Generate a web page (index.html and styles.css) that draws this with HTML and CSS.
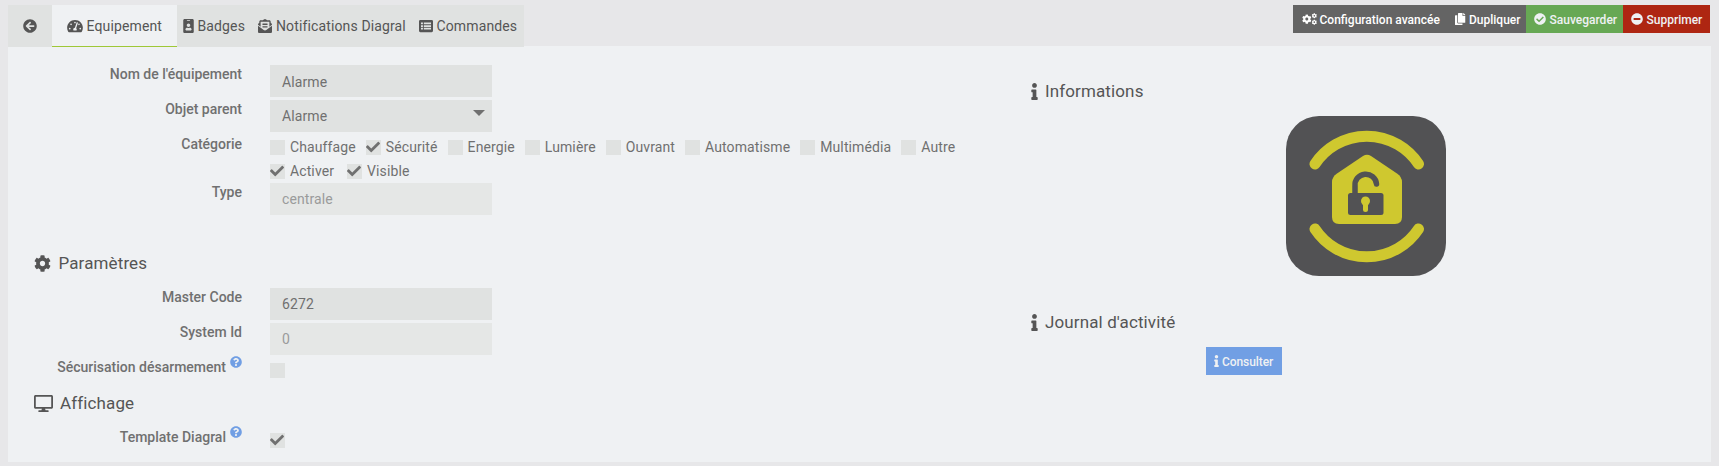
FILE: index.html
```html
<!DOCTYPE html>
<html lang="fr">
<head>
<meta charset="utf-8">
<title>Equipement</title>
<link rel="stylesheet" href="styles.css">
</head>
<body>
<svg class="defs" aria-hidden="true">
<symbol id="back" viewBox="0 0 512 512"><path d="M256 504C119 504 8 393 8 256S119 8 256 8s248 111 248 248-111 248-248 248zm28.9-143.6L209.4 288H392c13.3 0 24-10.7 24-24v-16c0-13.3-10.7-24-24-24H209.4l75.5-72.4c9.7-9.3 9.9-24.8.4-34.3l-11-10.9c-9.4-9.4-24.6-9.4-33.9 0L107.7 239c-9.4 9.4-9.4 24.6 0 33.9l132.7 132.7c9.4 9.4 24.6 9.4 33.9 0l11-10.9c9.5-9.5 9.3-25-.4-34.3z"/></symbol>
<symbol id="gauge" viewBox="0 0 576 512"><path d="M288 32C128.94 32 0 160.94 0 320c0 52.8 14.25 102.26 39.06 144.8 5.61 9.62 16.3 15.2 27.44 15.2h443c11.14 0 21.83-5.58 27.44-15.2C561.75 422.26 576 372.8 576 320c0-159.06-128.94-288-288-288zm0 64c14.71 0 26.58 10.13 30.32 23.65-1.11 2.26-2.64 4.23-3.45 6.67l-9.22 27.67c-5.13 3.49-10.97 6.01-17.64 6.01-17.67 0-32-14.33-32-32S270.33 96 288 96zM96 384c-17.67 0-32-14.33-32-32s14.33-32 32-32 32 14.33 32 32-14.33 32-32 32zm48-160c-17.67 0-32-14.33-32-32s14.33-32 32-32 32 14.33 32 32-14.33 32-32 32zm246.77-72.41l-61.33 184C343.13 347.33 352 364.54 352 384c0 11.72-3.38 22.55-8.88 32H232.88c-5.5-9.45-8.88-20.28-8.88-32 0-33.94 26.5-61.43 59.9-63.59l61.34-184.01c4.17-12.56 17.73-19.45 30.36-15.17 12.57 4.19 19.35 17.79 15.17 30.36zm14.66 57.2l15.52-46.55c3.47-1.29 7.13-2.23 11.05-2.23 17.67 0 32 14.33 32 32s-14.33 32-32 32c-11.38-.01-20.89-6.28-26.57-15.22zM480 384c-17.67 0-32-14.33-32-32s14.33-32 32-32 32 14.33 32 32-14.33 32-32 32z"/></symbol>
<symbol id="badge" viewBox="0 0 384 512"><path d="M336 0H48C21.5 0 0 21.5 0 48v416c0 26.5 21.5 48 48 48h288c26.5 0 48-21.5 48-48V48c0-26.5-21.5-48-48-48zM144 32h96c8.8 0 16 7.2 16 16s-7.2 16-16 16h-96c-8.8 0-16-7.2-16-16s7.2-16 16-16zm48 128c35.3 0 64 28.7 64 64s-28.7 64-64 64-64-28.7-64-64 28.7-64 64-64zm112 236.8c0 10.6-10 19.2-22.4 19.2H102.4C90 416 80 407.4 80 396.8v-19.2c0-31.8 30.1-57.6 67.2-57.6h5c12.3 5.1 25.7 8 39.8 8s27.6-2.9 39.8-8h5c37.1 0 67.2 25.8 67.2 57.6v19.2z"/></symbol>
<symbol id="mail" viewBox="0 0 512 512"><path d="M176 216h160c8.84 0 16-7.16 16-16v-16c0-8.84-7.16-16-16-16H176c-8.84 0-16 7.16-16 16v16c0 8.84 7.16 16 16 16zm-16 80c0 8.84 7.16 16 16 16h160c8.84 0 16-7.16 16-16v-16c0-8.84-7.16-16-16-16H176c-8.84 0-16 7.16-16 16v16zm96 121.13c-16.42 0-32.84-5.06-46.86-15.19L0 250.86V464c0 26.51 21.49 48 48 48h416c26.51 0 48-21.49 48-48V250.86L302.86 401.94c-14.02 10.12-30.44 15.19-46.86 15.19zm237.61-254.18c-8.85-6.94-17.24-13.47-29.61-22.81V96c0-26.51-21.49-48-48-48h-77.55c-3.04-2.2-5.87-4.26-9.04-6.56C312.6 29.17 279.2-.35 256 0c-23.2-.35-56.59 29.17-73.41 41.44-3.17 2.3-6 4.36-9.04 6.56H96c-26.51 0-48 21.49-48 48v44.14c-12.37 9.33-20.76 15.87-29.61 22.81A47.995 47.995 0 0 0 0 200.72v10.65l96 69.35V96h320v184.72l96-69.35v-10.65c0-14.74-6.78-28.67-18.39-37.77z"/></symbol>
<symbol id="list" viewBox="0 0 512 512"><path fill-rule="evenodd" d="M48 32H464a48 48 0 0 1 48 48V432a48 48 0 0 1-48 48H48a48 48 0 0 1-48-48V80a48 48 0 0 1 48-48zM72 124v64h72v-64zM176 124v64h264v-64zM72 224v64h72v-64zM176 224v64h264v-64zM72 324v64h72v-64zM176 324v64h264v-64z"/></symbol>
<symbol id="cog" viewBox="0 0 512 512"><path d="M487.4 315.7l-42.6-24.6c4.3-23.2 4.3-47 0-70.2l42.6-24.6c4.9-2.8 7.1-8.6 5.5-14-11.1-35.6-30-67.8-54.7-94.6-3.8-4.1-10-5.1-14.8-2.3L380.8 110c-17.9-15.4-38.5-27.3-60.8-35.1V25.8c0-5.6-3.9-10.5-9.4-11.7-36.7-8.2-74.3-7.8-109.2 0-5.5 1.2-9.4 6.1-9.4 11.7V75c-22.2 7.9-42.8 19.8-60.8 35.1L88.7 85.5c-4.9-2.8-11-1.9-14.8 2.3-24.7 26.7-43.6 58.9-54.7 94.6-1.7 5.4.6 11.2 5.5 14L67.3 221c-4.3 23.2-4.3 47 0 70.2l-42.6 24.6c-4.9 2.8-7.1 8.6-5.5 14 11.1 35.6 30 67.8 54.7 94.6 3.8 4.1 10 5.1 14.8 2.3l42.6-24.6c17.9 15.4 38.5 27.3 60.8 35.1v49.2c0 5.6 3.9 10.5 9.4 11.7 36.7 8.2 74.3 7.8 109.2 0 5.5-1.2 9.4-6.1 9.4-11.7v-49.2c22.2-7.9 42.8-19.8 60.8-35.1l42.6 24.6c4.9 2.8 11 1.9 14.8-2.3 24.7-26.7 43.6-58.9 54.7-94.6 1.5-5.5-.7-11.3-5.6-14.1zM256 336c-44.1 0-80-35.9-80-80s35.9-80 80-80 80 35.9 80 80-35.9 80-80 80z"/></symbol>
<symbol id="cogs" viewBox="0 0 640 512"><use href="#cog" x="0" y="56" width="410" height="410"/><use href="#cog" x="410" y="5" width="230" height="230"/><use href="#cog" x="410" y="277" width="230" height="230"/></symbol>
<symbol id="copy" viewBox="0 0 448 512"><path d="M320 448v40c0 13.255-10.745 24-24 24H24c-13.255 0-24-10.745-24-24V120c0-13.255 10.745-24 24-24h72v296c0 30.879 25.121 56 56 56h168zm0-344V0H152c-13.255 0-24 10.745-24 24v368c0 13.255 10.745 24 24 24h272c13.255 0 24-10.745 24-24V128H344c-13.2 0-24-10.8-24-24zm120.971-31.029L375.029 7.029A24 24 0 0 0 358.059 0H352v96h96v-6.059a24 24 0 0 0-7.029-16.97z"/></symbol>
<symbol id="ok" viewBox="0 0 512 512"><path d="M504 256c0 136.967-111.033 248-248 248S8 392.967 8 256 119.033 8 256 8s248 111.033 248 248zM227.314 387.314l184-184c6.248-6.248 6.248-16.379 0-22.627l-22.627-22.627c-6.248-6.249-16.379-6.249-22.628 0L216 308.118l-70.059-70.059c-6.248-6.248-16.379-6.248-22.628 0l-22.627 22.627c-6.248 6.248-6.248 16.379 0 22.627l104 104c6.249 6.249 16.379 6.249 22.628.001z"/></symbol>
<symbol id="minus" viewBox="0 0 512 512"><path d="M256 8C119 8 8 119 8 256s111 248 248 248 248-111 248-248S393 8 256 8zM124 296c-6.6 0-12-5.4-12-12v-56c0-6.6 5.4-12 12-12h264c6.6 0 12 5.4 12 12v56c0 6.6-5.4 12-12 12H124z"/></symbol>
<symbol id="info" viewBox="0 0 192 512"><path d="M20 424.229h20V279.771H20c-11.046 0-20-8.954-20-20V212c0-11.046 8.954-20 20-20h112c11.046 0 20 8.954 20 20v212.229h20c11.046 0 20 8.954 20 20V492c0 11.046-8.954 20-20 20H20c-11.046 0-20-8.954-20-20v-47.771c0-11.046 8.954-20 20-20zM96 0C56.235 0 24 32.235 24 72s32.235 72 72 72 72-32.235 72-72S135.764 0 96 0z"/></symbol>
<symbol id="desktop" viewBox="0 0 576 512"><path d="M528 0H48C21.5 0 0 21.5 0 48v320c0 26.5 21.5 48 48 48h192l-16 48h-72c-13.3 0-24 10.7-24 24s10.7 24 24 24h272c13.3 0 24-10.7 24-24s-10.7-24-24-24h-72l-16-48h192c26.5 0 48-21.5 48-48V48c0-26.5-21.5-48-48-48zm-6 362H54V54h468v308z"/></symbol>
<symbol id="help" viewBox="0 0 512 512"><path d="M504 256c0 136.997-111.043 248-248 248S8 392.997 8 256C8 119.083 119.043 8 256 8s248 111.083 248 248zM262.655 90c-54.497 0-89.255 22.957-116.549 63.758-3.536 5.286-2.353 12.415 2.715 16.258l34.699 26.31c5.205 3.947 12.621 3.008 16.665-2.122 17.864-22.658 30.113-35.797 57.303-35.797 20.429 0 45.698 13.148 45.698 32.958 0 14.976-12.363 22.667-32.534 33.976C247.128 238.528 216 254.941 216 296v4c0 6.627 5.373 12 12 12h56c6.627 0 12-5.373 12-12v-1.333c0-28.462 83.186-29.647 83.186-106.667 0-58.002-60.165-102-116.531-102zM256 338c-25.365 0-46 20.635-46 46 0 25.364 20.635 46 46 46s46-20.636 46-46c0-25.364-20.635-46-46-46z"/></symbol>
<symbol id="check" viewBox="0 0 512 512"><path d="M173.898 439.404l-166.4-166.4c-9.997-9.997-9.997-26.206 0-36.204l36.203-36.204c9.997-9.998 26.207-9.998 36.204 0L192 312.69 432.095 72.596c9.997-9.997 26.207-9.997 36.204 0l36.203 36.204c9.997 9.997 9.997 26.206 0 36.204l-294.4 294.401c-9.998 9.997-26.207 9.997-36.204-.001z"/></symbol>
</svg>

<header class="top">
  <nav class="tabs">
    <a class="tab tab-back"><svg class="i14"><use href="#back"/></svg></a>
    <a class="tab tab-active"><svg class="i16"><use href="#gauge"/></svg><span>Equipement</span></a>
    <a class="tab tab-badges"><svg class="i11"><use href="#badge"/></svg><span>Badges</span></a>
    <a class="tab tab-notif"><svg class="i14"><use href="#mail"/></svg><span>Notifications Diagral</span></a>
    <a class="tab tab-cmd"><svg class="i14"><use href="#list"/></svg><span>Commandes</span></a>
  </nav>
  <div class="actions">
    <a class="btn btn-config"><svg class="b15"><use href="#cogs"/></svg><span>Configuration avancée</span></a>
    <a class="btn btn-copy"><svg class="b11"><use href="#copy"/></svg><span>Dupliquer</span></a>
    <a class="btn btn-save"><svg class="b12"><use href="#ok"/></svg><span>Sauvegarder</span></a>
    <a class="btn btn-del"><svg class="b12"><use href="#minus"/></svg><span>Supprimer</span></a>
  </div>
</header>

<main class="panel">
  <section class="form">
    <div class="row"><label>Nom de l'équipement</label><div class="field">Alarme</div></div>
    <div class="row"><label>Objet parent</label><div class="field select">Alarme<i class="caret"></i></div></div>
    <div class="row row-cat"><label>Catégorie</label>
      <div class="checks">
        <div class="line">
          <span class="ck"><i class="box"></i>Chauffage</span>
          <span class="ck"><i class="box"><svg><use href="#check"/></svg></i>Sécurité</span>
          <span class="ck"><i class="box"></i>Energie</span>
          <span class="ck"><i class="box"></i>Lumière</span>
          <span class="ck"><i class="box"></i>Ouvrant</span>
          <span class="ck"><i class="box"></i>Automatisme</span>
          <span class="ck"><i class="box"></i>Multimédia</span>
          <span class="ck"><i class="box"></i>Autre</span>
        </div>
        <div class="line line-state">
          <span class="ck"><i class="box"><svg><use href="#check"/></svg></i>Activer</span>
          <span class="ck"><i class="box"><svg><use href="#check"/></svg></i>Visible</span>
        </div>
      </div>
    </div>
    <div class="row"><label>Type</label><div class="field off">centrale</div></div>
    <h2 class="h-param"><svg class="h-cog"><use href="#cog"/></svg><span>Paramètres</span></h2>
    <div class="row"><label>Master Code</label><div class="field">6272</div></div>
    <div class="row"><label>System Id</label><div class="field off">0</div></div>
    <div class="row"><label>Sécurisation désarmement<svg class="help"><use href="#help"/></svg></label><i class="box solo"></i></div>
    <h2 class="h-aff"><svg class="h-desk"><use href="#desktop"/></svg><span>Affichage</span></h2>
    <div class="row"><label>Template Diagral<svg class="help"><use href="#help"/></svg></label><i class="box solo"><svg><use href="#check"/></svg></i></div>
  </section>
  <section class="side">
    <h2 class="h-info"><svg class="h-i"><use href="#info"/></svg><span>Informations</span></h2>
    <svg class="logo" viewBox="0 0 160 160">
      <rect width="160" height="160" rx="33" fill="#525254"/>
      <path d="M29 48A62 62 0 0 1 132.500 48M29 113A62 62 0 0 0 132.500 113" fill="none" stroke="#cfc82f" stroke-width="11" stroke-linecap="round"/>
      <path d="M77 40Q81 37.500 85 40L111 57.500Q116 61 116 66V101Q116 108 109 108H53Q46 108 46 101V66Q46 61 51 57.500Z" fill="#cfc82f"/>
      <rect x="62" y="77" width="35.500" height="22" rx="2.500" fill="#525254"/>
      <path d="M69 80V70A10.700 10.700 0 0 1 90.500 68" fill="none" stroke="#525254" stroke-width="5.500" stroke-linecap="round"/>
      <circle cx="79.500" cy="85" r="4.500" fill="#cfc82f"/><path d="M79.500 86V93.500" stroke="#cfc82f" stroke-width="5" stroke-linecap="round"/>
    </svg>
    <h2 class="h-log"><svg class="h-i"><use href="#info"/></svg><span>Journal d'activité</span></h2>
    <a class="btn consult"><svg><use href="#info"/></svg><span>Consulter</span></a>
  </section>
</main>
</body>
</html>
```

FILE: styles.css
```css
* { box-sizing: border-box; }
body {
  margin: 0;
  height: 466px;
  overflow: hidden;
  background: #e7e7e9;
  font-family: Roboto, sans-serif;
  font-size: 14px;
  color: #707070;
}
svg { display: block; flex: none; fill: currentColor; }
i { font-style: normal; }
.defs { display: none; }

.top { display: flex; justify-content: space-between; height: 46px; padding: 5px 9px 0 8px; }
.tabs { display: flex; height: 42px; background: #e0e2e1; color: #555; z-index: 1; letter-spacing: 0.13px; }
.tab { display: flex; align-items: center; height: 42px; white-space: nowrap; }
.tab span { line-height: 42px; }
.tab-back { width: 44px; padding-left: 15px; }
.tab-active { width: 125px; padding-left: 15px; gap: 3.500px; background: #eff1f3; border-bottom: 1px solid #9fc837; }
.tab-badges { width: 75px; padding-left: 6px; gap: 3.500px; }
.tab-notif { width: 161px; padding-left: 6px; gap: 4px; }
.tab-cmd { width: 111px; padding-left: 6px; gap: 3.500px; }
.i14 { width: 14px; height: 14px; }
.i16 { width: 16px; height: 14px; }
.i11 { width: 11px; height: 14px; }

.actions { display: flex; height: 28px; }
.btn { display: flex; align-items: center; height: 28px; gap: 3.500px; padding-left: 8px; font-size: 12px; font-weight: 500; color: #fff; white-space: nowrap; }
.btn span { padding-top: 1px; }
.btn-config { width: 154px; background: #646464; gap: 2.500px; padding-left: 9px; }
.btn-copy { width: 79px; background: #646464; }
.btn-save { width: 97px; background: #67a854; color: #eff1f3; }
.btn-del { width: 87px; background: #ae2612; color: #eff1f3; }
.b15 { width: 15px; height: 12px; }
.b11 { width: 10.500px; height: 12px; }
.b12 { width: 12px; height: 12px; }

.panel { display: grid; grid-template-columns: 1002px 1fr; width: 1703px; height: 416px; margin-left: 8px; background: #eff1f3; }
.form { padding-top: 19px; }
.row { display: grid; grid-template-columns: 234px 1fr; column-gap: 28px; height: 35px; }
.row-cat { height: 48px; }
label { display: flex; justify-content: flex-end; height: 18px; line-height: 18px; font-weight: 500; }
.field { width: 222px; height: 32px; padding-left: 12px; background: #e0e2e1; line-height: 32px; letter-spacing: 0.1px; }
.row:first-child .field { line-height: 34px; }
.off { background: #e5e7e6; color: #9a9b9b; }
.select { display: flex; justify-content: space-between; padding-right: 7px; }
.caret { width: 12px; height: 6px; margin-top: 10px; background: #707070; clip-path: polygon(0 0, 100% 0, 50% 100%); }
.checks { padding-top: 5px; letter-spacing: 0.11px; }
.line { display: flex; gap: 10px; height: 24px; }
.line-state { gap: 13px; }
.ck { display: flex; gap: 5px; height: 15px; line-height: 15px; white-space: nowrap; }
.box { display: block; flex: none; width: 15px; height: 15px; background: #e0e2e1; }
.box svg { width: 14px; height: 14px; }
.solo { margin-top: 5px; }
.help { width: 12px; height: 12px; margin: -2.500px 0 0 4px; color: #719fe4; }

h2 { display: flex; align-items: center; margin: 0; font-size: 17px; font-weight: 400; line-height: 24px; height: 24px; color: #555; letter-spacing: 0.12px; }
.h-param { margin: 33px 0 13px; padding-left: 26px; gap: 7.500px; }
.h-cog { width: 17px; height: 17px; }
.h-aff { margin: -2px 0 13px; padding-left: 26px; gap: 7px; }
.h-desk { width: 19px; height: 17px; }
.h-info { margin-top: 33px; gap: 7px; }
.side { padding-left: 21px; }
.h-i { width: 7px; height: 17px; }
.logo { width: 160px; height: 160px; margin: 13px 0 0 255px; }
.h-log { margin-top: 34px; gap: 7px; }
.consult { width: 76px; margin: 13px 0 0 175px; gap: 3px; background: #719fe4; color: #eff1f3; letter-spacing: -0.08px; }
.consult svg { width: 5px; height: 12px; }
```
